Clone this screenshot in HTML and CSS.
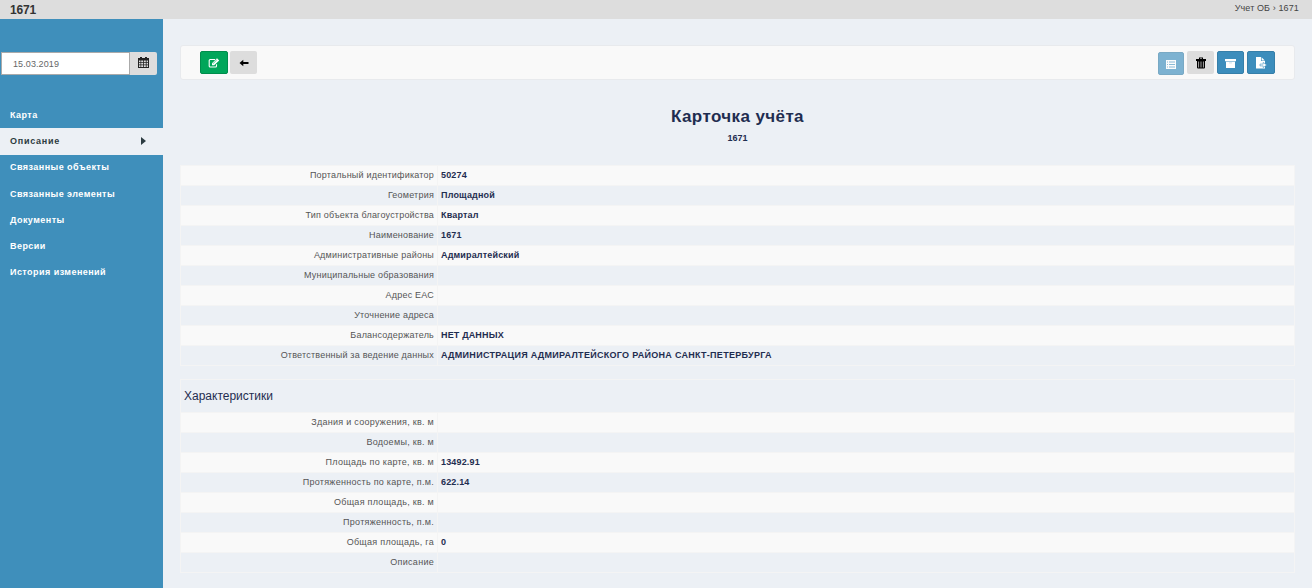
FILE: index.html
```html
<!DOCTYPE html>
<html lang="ru">
<head>
<meta charset="utf-8">
<title>1671</title>
<link rel="stylesheet" href="styles.css">
</head>
<body>
<header class="topbar"><span class="topbar-title">1671</span><nav class="crumbs">Учет ОБ › 1671</nav></header>
<div class="layout">
<aside class="sidebar">
<div class="date-group">
<div class="date-value">15.03.2019</div>
<div class="date-btn"><svg width="11" height="11" viewBox="0 0 11 11"><path fill="#222" fill-rule="evenodd" d="M0 1h2V0h2v1h3V0h2v1h2v10H0zM1 3.6v1.6h1.5V3.6zM3.2 3.6v1.6h1.9V3.6zM5.9 3.6v1.6h1.9V3.6zM8.6 3.6v1.6H10V3.6zM1 6v1.5h1.5V6zM3.2 6v1.5h1.9V6zM5.9 6v1.5h1.9V6zM8.6 6v1.5H10V6zM1 8.3V10h1.5V8.3zM3.2 8.3V10h1.9V8.3zM5.9 8.3V10h1.9V8.3zM8.6 8.3V10H10V8.3z"/></svg></div>
</div>
<nav class="menu">
<a class="menu-item">Карта</a>
<a class="menu-item active">Описание<svg width="5" height="8" viewBox="0 0 5 8"><path d="M0 0L5 4L0 8z" fill="#2c3b41"/></svg></a>
<a class="menu-item">Связанные объекты</a>
<a class="menu-item">Связанные элементы</a>
<a class="menu-item">Документы</a>
<a class="menu-item">Версии</a>
<a class="menu-item">История изменений</a>
</nav>
</aside>
<main class="content">
<div class="toolbar">
<div class="btn green"><svg width="12" height="10" viewBox="0 0 12 10"><path d="M7 1.5H2.2Q1.2 1.5 1.2 2.5V8Q1.2 9 2.2 9H7.5Q8.5 9 8.5 8V6.2" fill="none" stroke="#fff" stroke-width="1.1"/><path d="M4 7.3V5.2L9 .3L11.2 2.4L6.2 7.3z" fill="#fff"/><path d="M5 5.6L8.7 2" stroke="#00a65a" stroke-width=".6"/></svg></div>
<div class="btn gray"><svg width="10" height="8" viewBox="0 0 10 8"><path d="M.5 4L4.3 .8V3H9.5V5H4.3V7.2z" fill="#000"/></svg></div>
<div class="spacer"></div>
<div class="btn blue faded"><svg width="10" height="9" viewBox="0 0 10 9"><path d="M0 0h10v9H0z" fill="#fff"/><path d="M1 2h1M3 2h6M1 4.5h1M3 4.5h6M1 7h1M3 7h6" stroke="#3c8dbc" stroke-width=".9"/></svg></div>
<div class="btn gray"><svg width="10" height="12" viewBox="0 0 10 12"><path fill="#000" d="M3 .5h4V2h3v2H0V2h3zM1 4h8v6.5Q9 11.5 8 11.5H2Q1 11.5 1 10.5z"/><path d="M4 1.3h2V2H4zM2.1 4.6h1v5.8h-1zM4.5 4.6h1v5.8h-1zM6.9 4.6h1v5.8h-1z" fill="#aaa"/></svg></div>
<div class="btn blue"><svg class="nudge" width="11" height="9" viewBox="0 0 11 9"><path d="M0 0h11v2.3H0zM1 2.8h9V9H1z" fill="#fff"/><path d="M4 3.9h3" stroke="#b9d5e6" stroke-width=".7"/></svg></div>
<div class="btn blue last"><svg width="12" height="12" viewBox="0 0 12 12"><path d="M1 0h5v4h4v7.5H1z" fill="#fff"/><path d="M6.6 .2L9.8 3.4H6.6z" fill="#fff"/><path d="M5 7.1h3.2V5.4L11.8 8L8.2 10.6V8.9H5z" fill="#fff" stroke="#3c8dbc" stroke-width=".6"/></svg></div>
</div>
<h1 class="card-title">Карточка учёта</h1>
<p class="card-number">1671</p>
<table class="props">
<tr><th>Портальный идентификатор</th><td>50274</td></tr>
<tr><th>Геометрия</th><td>Площадной</td></tr>
<tr><th>Тип объекта благоустройства</th><td>Квартал</td></tr>
<tr><th>Наименование</th><td>1671</td></tr>
<tr><th>Административные районы</th><td>Адмиралтейский</td></tr>
<tr><th>Муниципальные образования</th><td></td></tr>
<tr><th>Адрес ЕАС</th><td></td></tr>
<tr><th>Уточнение адреса</th><td></td></tr>
<tr><th>Балансодержатель</th><td>НЕТ ДАННЫХ</td></tr>
<tr><th>Ответственный за ведение данных</th><td class="wide">АДМИНИСТРАЦИЯ АДМИРАЛТЕЙСКОГО РАЙОНА САНКТ-ПЕТЕРБУРГА</td></tr>
</table>
<section class="features">
<h2 class="features-title">Характеристики</h2>
<table class="props">
<tr><th>Здания и сооружения, кв. м</th><td></td></tr>
<tr><th>Водоемы, кв. м</th><td></td></tr>
<tr><th>Площадь по карте, кв. м</th><td>13492.91</td></tr>
<tr><th>Протяженность по карте, п.м.</th><td>622.14</td></tr>
<tr><th>Общая площадь, кв. м</th><td></td></tr>
<tr><th>Протяженность, п.м.</th><td></td></tr>
<tr><th>Общая площадь, га</th><td>0</td></tr>
<tr><th>Описание</th><td></td></tr>
</table>
</section>
</main>
</div>
</body>
</html>
```
FILE: styles.css
```css
* { box-sizing: border-box; }
body { margin: 0; height: 588px; overflow: hidden; background: #ecf0f5; font-family: "Liberation Sans", Arial, sans-serif; font-size: 9px; color: #1f2d50; display: flex; flex-direction: column; }
.topbar { height: 19px; flex: none; background: #ddd; display: flex; justify-content: space-between; color: #333; padding: 0 13px 0 10px; }
.topbar-title { font-size: 12px; line-height: 20px; font-weight: bold; letter-spacing: -.2px; }
.crumbs { line-height: 16px; color: #444; letter-spacing: .12px; }
.layout { display: flex; flex: 1; }
.sidebar { width: 163px; background: #3f8fbb; padding-top: 33px; flex: none; }
.date-group { display: flex; height: 23px; margin-left: 1px; width: 156px; }
.date-value { width: 129px; background: #fff; border: 1px solid #aaa; color: #666; line-height: 22px; padding-left: 11px; letter-spacing: .1px; }
.date-btn { flex: 1; background: #ddd; border-radius: 0 2px 2px 0; display: flex; justify-content: center; padding-top: 5px; }
.menu { margin-top: 27px; display: flex; flex-direction: column; }
.menu-item { height: 26.3px; line-height: 25px; padding: 0 17px 0 10px; color: #fff; font-weight: bold; letter-spacing: .45px; display: flex; justify-content: space-between; align-items: center; }
.menu-item.active { background: #ecf0f5; color: #2c3b41; letter-spacing: .75px; }
.content { flex: 1; padding: 26px 17px 0 17px; }
.toolbar { height: 35px; background: #f9f9f9; border: 1px solid #e8eaed; border-radius: 3px; display: flex; padding: 5px 19px 0; gap: 3px; }
.btn { width: 27px; height: 23px; border-radius: 2px; display: flex; align-items: center; justify-content: center; }
.green { width: 28px; background: #00a65a; border: 1px solid #008d4c; margin-right: -1px; }
.gray { background: #ddd; }
.blue { background: #3c8dbc; border: 1px solid #367fa9; }
.faded { opacity: .65; margin-top: 1px; width: 26px; padding-top: 1px; }
.nudge { margin-top: 2px; }
.last { width: 28px; }
.spacer { flex: 1; }
.card-title { margin: 27px 0 0; font-size: 17px; line-height: 20px; text-align: center; letter-spacing: .4px; }
.card-number { margin: 5px 0 0; line-height: 12px; text-align: center; font-weight: bold; }
.props { width: 1115px; border-collapse: collapse; table-layout: fixed; margin-top: 21px; }
.props th, .props td { height: 20px; padding: 0 3px 1px; border: 1px solid #f4f4f4; line-height: 12px; }
.props th { width: 257px; text-align: right; font-weight: normal; color: #555; letter-spacing: .21px; }
.props td { text-align: left; font-weight: bold; letter-spacing: .16px; }
.props td.wide { letter-spacing: .29px; }
.props tr:nth-child(odd) { background: #f9f9f9; }
.features { margin-top: 13px; border-top: 1px solid #f4f4f4; }
.features-title { margin: 0; height: 32px; border: solid #f4f4f4; border-width: 0 1px; font-size: 12px; line-height: 33px; font-weight: normal; padding-left: 3px; }
.features .props { margin-top: 0; }
.features .props th { letter-spacing: .28px; }
```
